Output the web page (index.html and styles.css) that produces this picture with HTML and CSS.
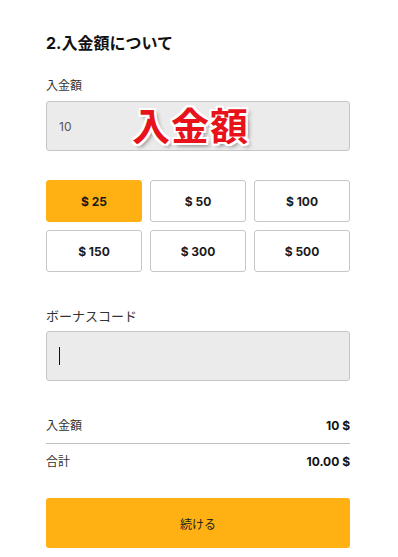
FILE: index.html
```html
<!DOCTYPE html>
<html>
<head>
    <title>入金額について</title>
    <meta name="viewport" content="width=device-width, initial-scale=1.0">
    <link rel="stylesheet" href="styles.css">
</head>
<body>
    <div class="container">
        <h2 class="title">2.入金額について</h2>

        <div class="label">入金額</div>
        <div class="field amount-field">
            <span class="value">10</span>
            <span class="overlay">入金額</span>
        </div>

        <div class="amounts">
            <button class="amount active">$ 25</button>
            <button class="amount">$ 50</button>
            <button class="amount">$ 100</button>
            <button class="amount">$ 150</button>
            <button class="amount">$ 300</button>
            <button class="amount">$ 500</button>
        </div>

        <div class="label bonus-label">ボーナスコード</div>
        <div class="field">
            <span class="caret"></span>
        </div>

        <div class="summary">
            <div class="row">
                <span>入金額</span>
                <b>10 $</b>
            </div>
            <div class="row">
                <span>合計</span>
                <b>10.00 $</b>
            </div>
        </div>

        <button class="submit">続ける</button>
    </div>
</body>
</html>
```

FILE: styles.css
```css
:root {
    --orange: #ffb012;
    --border: #c6c6c6;
}

body {
    margin: 0;
    background: #fff;
    font-family: Inter, "Noto Sans CJK JP", sans-serif;
    color: #222;
}

.container {
    width: 304px;
    padding: 33px 0 0 46px;
}

.title {
    margin: 0 0 25px;
    font-size: 16px;
    line-height: 20px;
    font-weight: 700;
    color: #111;
}

.label {
    font-size: 12px;
    line-height: 16px;
    color: #333;
    margin-bottom: 7px;
}

.bonus-label {
    margin-top: 36px;
    font-size: 13px;
}

.field {
    position: relative;
    box-sizing: border-box;
    height: 50px;
    background: #ebebeb;
    border: 1px solid var(--border);
    border-radius: 3px;
    display: flex;
    align-items: center;
    padding-left: 12px;
}

.value {
    font-size: 12px;
    color: #555;
}

/* red caption pasted over the amount field */
.overlay {
    position: absolute;
    left: 85px;
    top: 1px;
    font-size: 38px;
    line-height: 46px;
    font-weight: 700;
    color: #e8121a;
    letter-spacing: 1px;
    text-shadow:
        2px 0 0 #fff, -2px 0 0 #fff, 0 2px 0 #fff, 0 -2px 0 #fff,
        2px 2px 0 #fff, -2px -2px 0 #fff, 2px -2px 0 #fff, -2px 2px 0 #fff,
        3px 3px 4px rgba(0, 0, 0, 0.45);
}

.caret {
    width: 1px;
    height: 18px;
    background: #111;
}

.amounts {
    display: grid;
    grid-template-columns: repeat(3, 1fr);
    gap: 8px;
    margin: 29px 0 0;
}

.amount {
    height: 42px;
    background: #fff;
    border: 1px solid var(--border);
    border-radius: 3px;
    font-family: inherit;
    font-size: 12px;
    font-weight: 700;
    color: #1a1a1a;
    cursor: pointer;
}

.amount.active {
    background: var(--orange);
    border-color: var(--orange);
}

.summary {
    margin-top: 28px;
    font-size: 12px;
}

.row {
    display: flex;
    justify-content: space-between;
    line-height: 16px;
    padding: 9px 0;
}

.row:first-child {
    border-bottom: 1px solid #bdbdbd;
}

.row:last-child {
    padding: 10px 0 0;
}

.row span {
    color: #333;
}

.row b {
    font-weight: 700;
    color: #111;
}

.submit {
    display: block;
    width: 100%;
    height: 50px;
    margin-top: 28px;
    background: var(--orange);
    border: none;
    border-radius: 3px;
    font-family: inherit;
    font-size: 12px;
    color: #222;
    cursor: pointer;
}
```
